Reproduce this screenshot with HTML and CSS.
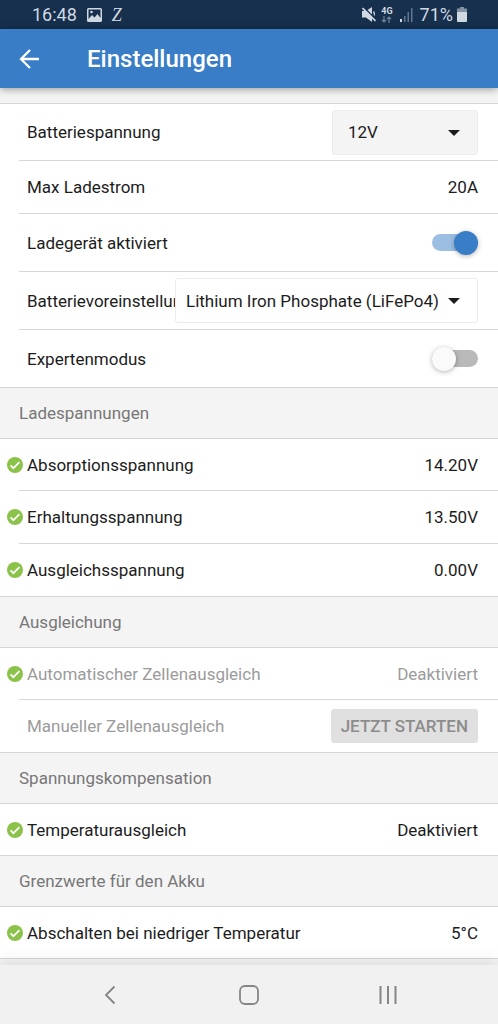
FILE: index.html
```
<!DOCTYPE html>
<html lang="de">
<head>
    <meta charset="UTF-8">
    <meta name="viewport" content="width=device-width, initial-scale=1.0">
    <title>Einstellungen</title>
    <link rel="stylesheet" href="styles.css">
</head>
<body>
    <svg class="defs" aria-hidden="true">
        <symbol id="check" viewBox="0 0 16 16">
            <circle cx="8" cy="8" r="8" fill="#8bc34a"/>
            <path d="M3.6 8.4l2.8 2.8 6-6" fill="none" stroke="#fff" stroke-width="1.7"/>
        </symbol>
    </svg>

    <div class="statusbar">
        <span class="time">16:48</span>
        <svg width="15" height="14" viewBox="0 0 15 14"><path fill="#d0d9e2" fill-rule="evenodd" d="M1.5 0h12A1.5 1.5 0 0 1 15 1.5v11a1.5 1.5 0 0 1-1.5 1.5h-12A1.5 1.5 0 0 1 0 12.5v-11A1.5 1.5 0 0 1 1.5 0zM1.5 1.5v9.500l3.500-4 2.500 2.500 3-3.500 3 4V1.500z"/><circle cx="4.5" cy="4" r="1.3" fill="#d0d9e2"/></svg>
        <span class="app-z">Z</span>
        <div class="status-right">
            <svg width="14" height="15" viewBox="0 0 14 15"><path fill="#d0d9e2" d="M0 4h4l6-4v15l-6-4.500H0z"/><path d="M1.500 0L14 12.500" stroke="#17304d" stroke-width="1.500"/><path d="M.5 1l13 13" stroke="#d0d9e2" stroke-width="1.700"/><path d="M11.500 4.500q1.500 2 .8 4" fill="none" stroke="#d0d9e2" stroke-width="1.300"/></svg>
            <div class="net">
                <span>4G</span>
                <svg width="11" height="7" viewBox="0 0 11 7"><path d="M3 0v6M1 4l2 2 2-2M8 7V1M6 3l2-2 2 2" fill="none" stroke="#71849a" stroke-width="1.2"/></svg>
            </div>
            <svg width="13" height="14" viewBox="0 0 13 14"><path fill="#d0d9e2" d="M0 11h2v3H0z"/><path fill="#62778f" d="M4 8h1.500v6H4zM7.500 4H9v10H7.500zM11 0h1.500v14H11z"/></svg>
            <span class="percent">71%</span>
            <svg width="10" height="15" viewBox="0 0 10 15"><path fill="#8493a3" d="M3 0h4v1.500h3V6H0V1.500h3z"/><path fill="#d0d9e2" d="M0 5h10v9a1 1 0 0 1-1 1H1a1 1 0 0 1-1-1z"/></svg>
        </div>
    </div>

    <header class="appbar">
        <button class="back" type="button" aria-label="Zurück">
            <svg width="20" height="20" viewBox="0 0 20 20"><path d="M20 10H2M11 1l-9 9 9 9" fill="none" stroke="#fff" stroke-width="2.3"/></svg>
        </button>
        <h1>Einstellungen</h1>
    </header>

    <main>
        <ul class="list controls">
            <li class="row">
                <label class="name" for="voltage">Batteriespannung</label>
                <div class="select filled">
                    <select id="voltage"><option>12V</option></select>
                </div>
            </li>
            <li class="row plain">
                <span class="name">Max Ladestrom</span>
                <span class="value">20A</span>
            </li>
            <li class="row">
                <label class="name" for="charger">Ladegerät aktiviert</label>
                <input class="switch" id="charger" type="checkbox" checked>
            </li>
            <li class="row">
                <label class="name" for="preset">Batterievoreinstellung</label>
                <div class="select wide">
                    <select id="preset"><option>Lithium Iron Phosphate (LiFePo4)</option></select>
                </div>
            </li>
            <li class="row">
                <label class="name" for="expert">Expertenmodus</label>
                <input class="switch" id="expert" type="checkbox">
            </li>
        </ul>

        <h2>Ladespannungen</h2>
        <ul class="list">
            <li class="row">
                <svg class="check"><use href="#check"/></svg>
                <span class="name">Absorptionsspannung</span>
                <span class="value">14.20V</span>
            </li>
            <li class="row">
                <svg class="check"><use href="#check"/></svg>
                <span class="name">Erhaltungsspannung</span>
                <span class="value">13.50V</span>
            </li>
            <li class="row">
                <svg class="check"><use href="#check"/></svg>
                <span class="name">Ausgleichsspannung</span>
                <span class="value">0.00V</span>
            </li>
        </ul>

        <h2>Ausgleichung</h2>
        <ul class="list">
            <li class="row disabled">
                <svg class="check"><use href="#check"/></svg>
                <span class="name">Automatischer Zellenausgleich</span>
                <span class="value">Deaktiviert</span>
            </li>
            <li class="row disabled">
                <span class="name">Manueller Zellenausgleich</span>
                <button class="start" type="button" disabled>JETZT STARTEN</button>
            </li>
        </ul>

        <h2>Spannungskompensation</h2>
        <ul class="list">
            <li class="row">
                <svg class="check"><use href="#check"/></svg>
                <span class="name">Temperaturausgleich</span>
                <span class="value">Deaktiviert</span>
            </li>
        </ul>

        <h2>Grenzwerte für den Akku</h2>
        <ul class="list">
            <li class="row">
                <svg class="check"><use href="#check"/></svg>
                <span class="name">Abschalten bei niedriger Temperatur</span>
                <span class="value">5°C</span>
            </li>
        </ul>
    </main>

    <nav class="navbar">
        <button type="button" aria-label="Zurück">
            <svg width="20" height="20" viewBox="0 0 20 20"><path d="M14.500 1.500L6 10l8.500 8.500" fill="none" stroke="#858585" stroke-width="1.8"/></svg>
        </button>
        <button type="button" aria-label="Startbildschirm">
            <svg width="20" height="20" viewBox="0 0 20 20"><rect x="1" y="1" width="18" height="18" rx="5" fill="none" stroke="#858585" stroke-width="1.8"/></svg>
        </button>
        <button type="button" aria-label="Letzte Apps">
            <svg width="20" height="20" viewBox="0 0 20 20"><path d="M2.500 1v18M10 1v18M17.500 1v18" stroke="#858585" stroke-width="2"/></svg>
        </button>
    </nav>
</body>
</html>
```
FILE: styles.css
```
* {
    box-sizing: border-box;
}
body {
    margin: 0;
    min-height: 100vh;
    display: flex;
    flex-direction: column;
    background: #f4f4f4;
    color: #1c1c1c;
    font-family: Roboto, sans-serif;
    font-size: 17px;
    line-height: 20px;
}
svg {
    display: block;
    flex: none;
}
button {
    padding: 0;
    border: 0;
    background: none;
    font: inherit;
}
.defs {
    position: absolute;
    width: 0;
    height: 0;
}

/* status bar */
.statusbar {
    display: flex;
    align-items: center;
    height: 29px;
    padding: 0 31px 0 32px;
    background: #17304d;
    color: #d0d9e2;
}
.time {
    margin-right: 10px;
    font-size: 18px;
}
.app-z {
    margin-left: 10px;
    font: italic 18px/20px "Liberation Serif", serif;
}
.status-right {
    display: flex;
    align-items: center;
    margin-left: auto;
}
.net {
    display: flex;
    flex-direction: column;
    align-items: center;
    margin: 0 7px 0 5px;
    font-size: 9px;
    font-weight: 700;
    line-height: 9px;
}
.percent {
    margin: 0 4px 0 7px;
    font-size: 18px;
}

/* app bar */
.appbar {
    position: relative;
    display: flex;
    align-items: center;
    height: 59px;
    padding-left: 19px;
    background: #397dc6;
    color: #fff;
    box-shadow: 0 1px 8px rgba(0, 0, 0, .4);
}
.appbar h1 {
    margin: 0 0 0 48px;
    font-size: 24px;
    font-weight: 500;
    line-height: 28px;
}

/* settings */
main {
    padding-top: 15px;
}
.list {
    margin: 0;
    padding: 0;
    list-style: none;
    background: #fff;
    border: solid #d6d6d6;
    border-width: 1px 0 0;
}
.list:last-child {
    border-bottom-width: 1px;
}
.row {
    display: flex;
    align-items: center;
    min-height: 53px;
    margin-left: 19px;
    padding: 0 20px 0 8px;
    border-top: 1px solid #d6d6d6;
}
.row:first-child {
    min-height: 51px;
    border-top: 0;
}
.controls .row {
    min-height: 58px;
}
.controls .row:first-child {
    min-height: 56px;
}
.controls .plain {
    min-height: 53px;
}
.name {
    flex: 1;
    min-width: 0;
    overflow: hidden;
    white-space: nowrap;
}
.check {
    width: 16px;
    height: 16px;
    margin: 0 4px 0 -20px;
}
.disabled {
    color: #9b9b9b;
}
h2 {
    margin: 0;
    padding: 15px 19px;
    border-top: 1px solid #d6d6d6;
    color: #777;
    font-size: 17px;
    font-weight: 400;
}

/* controls */
.select {
    position: relative;
    width: 146px;
}
.select.wide {
    width: 303px;
}
.select select {
    width: 100%;
    height: 45px;
    padding: 0 36px 0 15px;
    border: 1px solid #ececec;
    border-radius: 3px;
    background: #fff;
    color: inherit;
    font: inherit;
    appearance: none;
}
.select.wide select {
    padding-left: 10px;
}
.select.filled select {
    background: #f4f4f4;
}
.select::after {
    content: "";
    position: absolute;
    top: 20px;
    right: 18px;
    border: 6px solid transparent;
    border-top-color: #1c1c1c;
    border-bottom: 0;
    pointer-events: none;
}
.switch {
    display: flex;
    align-items: center;
    width: 46px;
    height: 17px;
    margin: 0;
    border-radius: 9px;
    background: #b9b9b9;
    appearance: none;
}
.switch::before {
    content: "";
    width: 24px;
    height: 24px;
    flex: none;
    border-radius: 50%;
    background: #fafafa;
    box-shadow: 0 1px 5px rgba(0, 0, 0, .3);
}
.switch:checked {
    justify-content: flex-end;
    background: #9cbee3;
}
.switch:checked::before {
    background: #397dc6;
}
.start {
    height: 34px;
    padding: 0 10px;
    border-radius: 3px;
    background: #e0e0e0;
    color: #8c8c8c;
    font-weight: 500;
}

/* system navigation */
.navbar {
    display: flex;
    align-items: center;
    justify-content: space-between;
    height: 59px;
    margin-top: auto;
    padding: 0 100px;
    background: #f1f1f1;
    box-shadow: 0 -2px 16px rgba(0, 0, 0, .12);
}
```
